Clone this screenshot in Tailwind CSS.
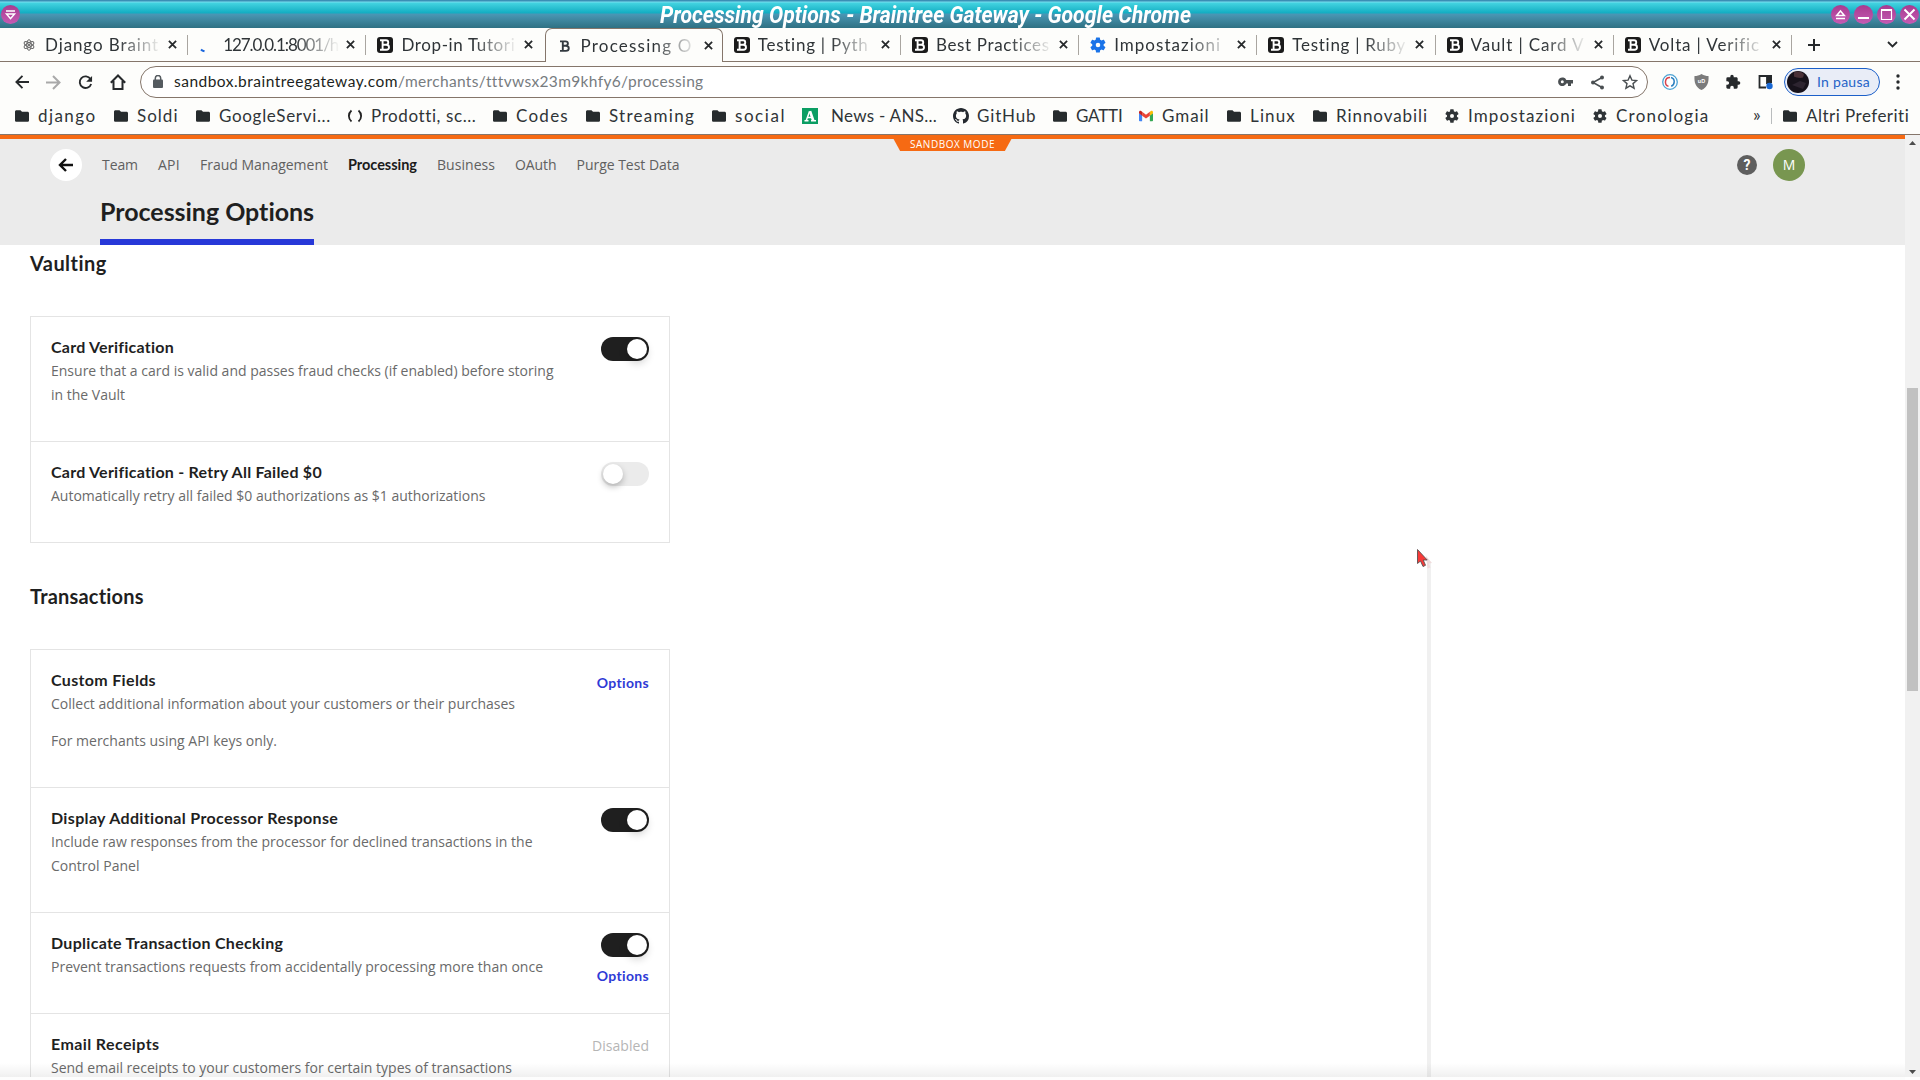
<!DOCTYPE html>
<html lang="it">
<head>
<meta charset="utf-8">
<title>Processing Options - Braintree Gateway</title>
<script src="https://cdn.jsdelivr.net/npm/@tailwindcss/browser@4"></script>
</head>
<body class="w-[1920px] h-[1080px] overflow-hidden bg-white font-['Open_Sans',sans-serif]">
<svg class="absolute size-0">
  <symbol id="folder" viewBox="0 0 14 14"><path fill="#262b2d" d="M1.500 1.300h4l1.500 1.500h5.500c.8 0 1.500.6 1.500 1.400v7.200c0 .8-.7 1.400-1.500 1.400h-11c-.8 0-1.500-.6-1.500-1.400v-8.700c0-.8.700-1.400 1.500-1.400z"/></symbol>
  <symbol id="gear" viewBox="1.500 1.500 21 21"><path fill="currentColor" fill-rule="evenodd" d="M19.400 13a7.500 7.500 0 0 0 0-2l2.200-1.700c.2-.1.200-.4.100-.6l-2-3.500c-.1-.2-.4-.3-.6-.2l-2.600 1a7.700 7.700 0 0 0-1.700-1l-.4-2.600a.5.500 0 0 0-.5-.4h-4a.5.500 0 0 0-.5.400l-.4 2.700c-.6.200-1.200.6-1.700 1l-2.500-1.100c-.2-.1-.5 0-.6.200l-2 3.500c-.1.200-.1.500.1.600l2.200 1.700a7.500 7.500 0 0 0 0 2l-2.200 1.700c-.2.100-.2.400-.1.600l2 3.500c.1.200.4.300.6.200l2.500-1c.5.400 1.100.7 1.700 1l.4 2.600c0 .2.200.4.500.4h4c.3 0 .5-.2.500-.4l.4-2.700c.6-.2 1.200-.6 1.700-1l2.500 1c.2.100.5 0 .6-.2l2-3.500c.1-.2.100-.5-.1-.6zM12 15a3 3 0 1 1 0-6 3 3 0 0 1 0 6z"/></symbol>
  <symbol id="braces" viewBox="0 0 16 16"><path fill="none" stroke="#222" stroke-width="1.800" d="M4.500 2.500C1 5.500 1 10.500 4.500 13.500M11.500 2.500c3.500 3 3.500 8 0 11"/></symbol>
  <symbol id="ansa" viewBox="0 0 16 16"><path fill="#0b9e63" d="M0 0h16v16H0z"/><path fill="none" stroke="#fff" stroke-width="1.500" d="M2.500 12.700h4M9 12.700h5M4.300 12.500 7.500 3.500M5.300 9.600h4.500"/><path stroke="#fff" stroke-width="2.600" d="m8 3.200 3.200 9.300"/></symbol>
  <symbol id="github" viewBox="0 0 16 16"><path fill="#24292f" d="M8 0C3.580 0 0 3.580 0 8c0 3.540 2.290 6.530 5.470 7.590.4.070.55-.17.55-.38 0-.19-.01-.82-.01-1.490-2.010.37-2.530-.49-2.690-.94-.09-.23-.48-.94-.82-1.130-.28-.15-.68-.52-.01-.53.63-.01 1.080.58 1.230.82.72 1.210 1.870.87 2.330.66.07-.52.28-.87.51-1.070-1.780-.2-3.640-.89-3.640-3.950 0-.87.31-1.590.82-2.150-.08-.2-.36-1.020.08-2.120 0 0 .67-.21 2.200.82.64-.18 1.320-.27 2-.27s1.360.09 2 .27c1.530-1.040 2.200-.82 2.200-.82.44 1.100.16 1.920.08 2.120.51.56.82 1.270.82 2.150 0 3.070-1.870 3.750-3.650 3.950.29.25.54.73.54 1.480 0 1.070-.01 1.930-.01 2.200 0 .21.15.46.55.38A8 8 0 0 0 16 8c0-4.420-3.580-8-8-8z"/></symbol>
  <symbol id="gmail" viewBox="0 0 16 14"><path fill="#4285f4" d="M0 3.500 3.600 6v7H1.200C.5 13 0 12.500 0 11.800z"/><path fill="#34a853" d="M12.400 6 16 3.500v8.300c0 .7-.5 1.200-1.200 1.200h-2.400z"/><path fill="#fbbc04" d="M12.400 2.200 13.600 1.300c1-.7 2.400 0 2.400 1.300v1.300l-3.600 2.700z"/><path fill="#ea4335" d="M3.600 2.200 8 5.500l4.400-3.300v4.400L8 9.900 3.600 6.600z"/><path fill="#c5221f" d="M0 2.600C0 1.300 1.400.6 2.400 1.300l1.200.9v4.400L0 3.900z"/></symbol>
  <symbol id="btree" viewBox="0 0 16 16"><rect width="16" height="16" rx="3" fill="#1b1b1b"/><path fill="none" stroke="#fff" stroke-width="1.900" d="M3 3.300h6c3 0 3 4.200 0 4.400H5.500M3 12.700h6.300c3.600 0 3.600-5 0-5M5.600 3.300v9.400"/></symbol>
  <symbol id="bplain" viewBox="0 0 16 16"><path fill="none" stroke="#333a40" stroke-width="1.900" d="M3 3.400H8.500c3.200 0 3.200 4.300 0 4.400H5.800M3 12.900h6c3.700 0 3.700-5.100 0-5.100M5.800 3.400v9.500"/></symbol>
  <symbol id="atom" viewBox="0 0 16 16"><g fill="none" stroke="#666" stroke-width="1"><ellipse cx="8" cy="8" rx="5.400" ry="2.200" transform="rotate(30 8 8)"/><ellipse cx="8" cy="8" rx="5.400" ry="2.200" transform="rotate(90 8 8)"/><ellipse cx="8" cy="8" rx="5.400" ry="2.200" transform="rotate(150 8 8)"/></g><circle cx="8" cy="8" r="1.100" fill="#555"/></symbol>
  <symbol id="spin" viewBox="0 0 16 16"><path fill="none" stroke="#1a66dd" stroke-width="2" d="M2 12.500c.9.900 2 1.400 3.500 1.800"/></symbol>
  <symbol id="close" viewBox="0 0 10 10"><path stroke="#26292b" stroke-width="2" d="m1 1 8 8M9 1 1 9"/></symbol>
  <linearGradient id="orb" x2="0" y2="1"><stop stop-color="#a83a8f"/><stop offset="1" stop-color="#c45bb3"/></linearGradient>
</svg>

<div class="flex flex-col h-[1080px]">
  <!-- window title bar -->
  <header class="relative h-7 shrink-0 bg-[linear-gradient(#3a8fb5_0px,#3a8fb5_1px,#79dff0_2px,#43d3e0_3px,#12adc2_13px,#4a97b5_14px,#2f7183_28px)] flex items-center justify-between pl-[1px] pr-[1px]">
    <svg class="size-[19px]" viewBox="0 0 19 19"><circle cx="9.500" cy="9.500" r="9.500" fill="url(#orb)"/><g fill="none" stroke="#fff" stroke-width="1.500"><path d="M5 6h9M5.500 9h8l-4 4.700z"/></g></svg>
    <div class="absolute left-[660px] top-0.5 h-7 leading-7 whitespace-nowrap text-white font-bold italic text-[23px] font-['Roboto',sans-serif] origin-left" data-scale="531">Processing Options - Braintree Gateway - Google Chrome</div>
    <div class="flex gap-1">
      <svg class="size-[19px]" viewBox="0 0 19 19"><circle cx="9.500" cy="9.500" r="9.500" fill="url(#orb)"/><path fill="none" stroke="#fff" stroke-width="1.500" d="M5 13.500h9M5.700 10.500h7.600L9.500 6z"/></svg>
      <svg class="size-[19px]" viewBox="0 0 19 19"><circle cx="9.500" cy="9.500" r="9.500" fill="url(#orb)"/><path stroke="#fff" stroke-width="2" d="M4 13h11"/></svg>
      <svg class="size-[19px]" viewBox="0 0 19 19"><circle cx="9.500" cy="9.500" r="9.500" fill="url(#orb)"/><path fill="none" stroke="#fff" stroke-width="1.200" d="M4.500 5h10v9.500h-10z"/><path stroke="#fff" stroke-width="2" d="M4 5h11"/></svg>
      <svg class="size-[19px]" viewBox="0 0 19 19"><circle cx="9.500" cy="9.500" r="9.500" fill="url(#orb)"/><path stroke="#fff" stroke-width="2" d="m4.500 4.500 10 10M14.500 4.500l-10 10"/></svg>
    </div>
  </header>

  <!-- tab strip -->
  <div class="flex h-[34px] shrink-0 bg-[#fdfdfb] font-['Lato',sans-serif] text-[17px] text-[#2f3437]">
    <div class="w-[10px] border-b border-[#85766b]"></div>
    <div id="tabs" class="flex"></div>
    <div class="flex-1 flex items-center justify-between border-b border-[#85766b] pl-4 pr-[22px]">
      <svg class="size-3" viewBox="0 0 12 12"><path stroke="#26292b" stroke-width="2" d="M6 0v12M0 6h12"/></svg>
      <svg class="w-[11px] h-[7px]" viewBox="0 0 11 7"><path fill="none" stroke="#26292b" stroke-width="1.800" d="m1 1 4.500 4.500L10 1"/></svg>
    </div>
  </div>

  <!-- toolbar -->
  <div class="flex items-center h-10 shrink-0 bg-[#fdfdfb] pl-[15px] pr-[16px]">
    <div class="flex items-center gap-[17px] w-[125px]">
      <svg class="size-[14px]" viewBox="0 0 15 15"><path fill="none" stroke="#26292b" stroke-width="2" d="M15 7.500H1.500M8 1 1.500 7.500 8 14"/></svg>
      <svg class="size-[15px]" viewBox="0 0 15 15"><path fill="none" stroke="#a9a9a9" stroke-width="2" d="M0 7.500h13.500M7 1l6.500 6.500L7 14"/></svg>
      <svg class="size-[15px]" viewBox="0 0 16 16"><path fill="none" stroke="#26292b" stroke-width="2" d="M13.300 4.300a6.200 6.200 0 1 0 .7 5.200"/><path fill="#26292b" d="M15 1v6.300H8.700z"/></svg>
      <svg class="size-4" viewBox="0 0 16 16"><path fill="none" stroke="#26292b" stroke-width="2" d="M.8 8.700 8 1.500l7.200 7.200M3.500 7v8h9V7"/></svg>
    </div>
    <div class="flex items-center w-[1508px] h-8 rounded-full border border-[#85766b] bg-white pl-3 pr-[9px] font-['Lato',sans-serif] text-[15.500px]">
      <svg class="w-[10px] h-[13px] mb-px" viewBox="0 0 10 13"><rect y="4.500" width="10" height="8.500" rx="1" fill="#555b60"/><path fill="none" stroke="#555b60" stroke-width="1.500" d="M2.300 5V3.200a2.700 2.700 0 0 1 5.400 0V5"/></svg>
      <span class="ml-[11px] text-[#1c1f21] whitespace-nowrap" data-w="224">sandbox.braintreegateway.com</span><span class="text-[#777c7f] whitespace-nowrap" data-w="305">/merchants/tttvwsx23m9khfy6/processing</span>
      <div class="ml-auto flex items-center gap-[17px] text-[#4a4f52]">
        <svg class="w-[15px] h-[10px]" viewBox="0 0 15 10"><path fill="currentColor" fill-rule="evenodd" d="M8.300 3A4.300 4.300 0 1 0 8.300 6.500H10V9h3V6.500h2V3zM4.300 3.300a1.500 1.500 0 1 1 0 3 1.500 1.500 0 0 1 0-3z"/></svg>
        <svg class="w-[15px] h-[15px]" viewBox="0 0 15 15"><path fill="none" stroke="currentColor" stroke-width="1.500" d="m12 2.500-9 5 9 5"/><circle cx="12" cy="2.500" r="2" fill="currentColor"/><circle cx="3" cy="7.500" r="2" fill="currentColor"/><circle cx="12" cy="12.500" r="2" fill="currentColor"/></svg>
        <svg class="w-4 h-4" viewBox="0 0 16 16"><path fill="none" stroke="currentColor" stroke-width="1.400" d="m8 1.800 1.900 4.300 4.700.4-3.600 3.100 1.100 4.600L8 11.800l-4.100 2.400L5 9.600 1.400 6.500l4.700-.4z"/></svg>
      </div>
    </div>
    <div class="flex items-center gap-4 ml-[14px]">
      <svg class="size-4" viewBox="0 0 16 16"><circle cx="8" cy="8" r="7.300" fill="#fff" stroke="#4da3d4" stroke-width="1.300"/><path fill="none" stroke="#2a7fbf" stroke-width="1.500" d="M9 3.500C13.500 4.500 13 11 9.200 12.300"/><path fill="none" stroke="#d8434b" stroke-width="1.500" d="M8 3.600C2.500 3.500 2 11 6.500 12.400"/></svg>
      <svg class="w-[15px] h-4" viewBox="0 0 15 16"><path fill="#7b7b7b" d="M7.500 0C10 1.500 12 2 14.500 2c.5 6-1 11.500-7 14C1.500 13.500 0 8 .5 2 3 2 5 1.500 7.500 0z"/><text x="7.500" y="9.300" text-anchor="middle" font-family="Liberation Sans,sans-serif" font-weight="bold" font-size="5.500" fill="#fff">uD</text></svg>
      <svg class="size-4" viewBox="0 0 24 24"><path fill="#26292b" d="M20.500 11H19V7c0-1.100-.9-2-2-2h-4V3.500a2.500 2.500 0 0 0-5 0V5H4a2 2 0 0 0-2 2v3.800h1.500a2.700 2.700 0 0 1 0 5.400H2V20c0 1.100.9 2 2 2h3.800v-1.500a2.700 2.700 0 0 1 5.400 0V22H17a2 2 0 0 0 2-2v-4h1.500a2.500 2.500 0 0 0 0-5z"/></svg>
      <svg class="w-[15px] h-4 ml-px" viewBox="0 0 15 16"><path fill="none" stroke="#26292b" stroke-width="1.800" d="M8 13.500H1.500V2H9v8"/><path fill="#26292b" d="M9 1h5v8H9z"/><circle cx="11.500" cy="12" r="3.200" fill="#1967d2"/></svg>
    </div>
    <div class="ml-[11px] flex items-center w-[96px] h-7 rounded-full border border-[#1b5fc9] bg-[#e9edf7] pl-[2px] font-['Lato',sans-serif] text-sm text-[#1f63c8]">
      <svg class="size-[22px]" viewBox="0 0 22 22"><circle cx="11" cy="11" r="11" fill="#17121b"/><path fill="#4a3138" d="M7 1.500c4-2 8-.5 10 2l-1 3c-3 1-7 0-9-1z"/><path fill="#2d2430" d="m5 14 8-4 6 2-3 6z"/></svg>
      <span class="ml-2 whitespace-nowrap" data-w="53">In pausa</span>
    </div>
    <svg class="ml-auto w-1 h-4 mr-1" viewBox="0 0 4 16"><g fill="#26292b"><circle cx="2" cy="2" r="1.700"/><circle cx="2" cy="8" r="1.700"/><circle cx="2" cy="14" r="1.700"/></g></svg>
  </div>

  <!-- bookmarks -->
  <div class="flex h-[33px] shrink-0 items-start bg-[#fdfdfb] border-b border-[#85766b] pl-[15px] font-['Lato',sans-serif] text-[17px] text-[#2f3437]">
    <div id="bookmarks" class="flex items-center h-7"></div>
    <div class="flex items-center h-7 ml-[44px] text-lg leading-none"><span class="w-[18px] pb-1">»</span><span class="w-px h-4 bg-[#b9bcbd]"></span></div>
    <div class="flex items-center h-7 ml-[11px]"><svg class="size-[14px]"><use href="#folder"/></svg><span class="ml-[9px] whitespace-nowrap" data-w="103.500">Altri Preferiti</span></div>
  </div>

  <!-- page -->
  <div class="flex flex-1 min-h-0">
    <main class="relative w-[1905px] overflow-hidden">
      <section class="relative h-[110px] border-t-4 border-[#f66a13] bg-[#ebebeb]">
        <div class="absolute left-[893px] -top-px w-[119px] h-[13px] bg-[#f66a13] [clip-path:polygon(0_0,100%_0,94%_100%,6%_100%)] flex justify-center text-[10px] leading-[12px] text-white whitespace-nowrap"><span data-w="85">SANDBOX MODE</span></div>
        <div class="flex items-center pl-[50px] pr-[100px] pt-[10px]">
          <svg class="size-8" viewBox="0 0 32 32"><circle cx="16" cy="16" r="16" fill="#fff"/><path fill="none" stroke="#111" stroke-width="2.400" d="M23 16H10.500M16 10l-6 6 6 6"/></svg>
          <nav class="flex items-center gap-5 ml-5 text-sm text-[#606060] whitespace-nowrap">
            <a data-w="36">Team</a><a data-w="22">API</a><a data-w="128">Fraud Management</a><a class="font-['Lato',sans-serif] font-bold text-[14.500px] text-[#1b1b1b]" data-w="69">Processing</a><a data-w="58">Business</a><a data-w="41.500">OAuth</a><a data-w="103">Purge Test Data</a>
          </nav>
          <div class="ml-auto size-5 rounded-full bg-[#5e5e5e] text-white text-center text-sm leading-5 font-bold font-['Roboto',sans-serif]">?</div>
          <div class="ml-4 size-8 rounded-full bg-[#789650] text-white text-center text-sm leading-8">M</div>
        </div>
        <h1 class="ml-[100px] mt-[7px] inline-block h-[57px] w-[214px] border-b-[6px] border-[#2738d8] font-['Lato',sans-serif] font-bold text-[25px] leading-[47px] text-[#1f1f1f] whitespace-nowrap"><span data-w="214.500">Processing Options</span></h1>
      </section>

      <section class="pl-[30px] font-['Open_Sans',sans-serif]">
        <h2 class="h-[71px] pt-1 font-['Lato',sans-serif] font-bold text-xl leading-7 text-[#1f1f1f]"><span data-w="77">Vaulting</span></h2>
        <div id="vaulting" class="w-[640px] border border-t-0 border-[#e4e4e4]"></div>
        <h2 class="h-[106px] pt-[39px] font-['Lato',sans-serif] font-bold text-xl leading-7 text-[#1f1f1f]"><span data-w="114">Transactions</span></h2>
        <div id="transactions" class="w-[640px] border border-t-0 border-[#e4e4e4]"></div>
      </section>

      <div class="absolute left-[1427px] top-[427px] w-1 h-[520px] bg-black/6"></div>
      <svg class="absolute left-[1416px] top-[413px] w-[18px] h-[22px]" viewBox="0 0 18 22"><path fill="#efdcdc" d="M10 8l6 7-3 .5 1.500 4-3 1z"/><path fill="#f83a38" stroke="#5a5050" stroke-width=".9" d="M1.500 1.500v14l3-2.500 2.500 5.500 2.500-1.200-2.300-5.300h4z"/></svg>
      <div class="absolute left-0 right-0 bottom-[3px] h-[14px] bg-linear-to-b from-transparent to-black/6"></div>
      <div class="absolute left-0 right-0 bottom-0 h-[3px] bg-[#fdfdfd]"></div>
    </main>
    <aside class="w-[15px] bg-[#f1f1f1] flex flex-col items-center pt-[6px] pb-[3px] mb-[3px]">
      <svg class="w-[7px] h-1" viewBox="0 0 7 4"><path fill="#4d4d4d" d="M0 4 3.500 0 7 4z"/></svg>
      <div class="mt-[243px] w-[11px] h-[303px] bg-[#c1c1c1]"></div>
      <svg class="mt-auto w-[7px] h-1" viewBox="0 0 7 4"><path fill="#4d4d4d" d="m0 0 3.500 4L7 0z"/></svg>
    </aside>
  </div>
</div>

<script>
const tabs = [
  ['atom', 'Django Braint', 114], ['spin', '127.0.0.1:8001/h', 115], ['btree', 'Drop-in Tutori', 114],
  ['bplain', 'Processing O', 112], ['btree', 'Testing | Pyth', 111], ['btree', 'Best Practices', 114],
  ['gear', 'Impostazioni', 107], ['btree', 'Testing | Ruby', 114], ['btree', 'Vault | Card V', 114], ['btree', 'Volta | Verific', 111],
];
document.getElementById('tabs').innerHTML = tabs.map(([icon, label, w], i) => {
  const box = i === 3
    ? 'relative w-[178.200px] flex items-center rounded-t-[7px] border border-b-0 border-[#85766b] pl-[11px]'
    : 'relative w-[178.200px] flex items-center border-b border-[#85766b] pl-[11px]';
  const sep = i === 2 || i === 3 ? '' : '<span class="absolute right-0 top-[7px] w-px h-5 bg-[#a9a5a0]"></span>';
  return `<div class="${box}"><svg class="size-4 text-[#1a73e8]"><use href="#${icon}"/></svg>
    <span class="ml-2 w-[117px] whitespace-nowrap [mask-image:linear-gradient(90deg,#000_62%,transparent_100%)]"><span data-w="${w}">${label}</span></span>
    <svg class="ml-[6px] size-[9px]"><use href="#close"/></svg>${sep}</div>`;
}).join('');

const marks = [
  ['folder', 'django', 15, 38, 58.5], ['folder', 'Soldi', 114, 137, 41.5], ['folder', 'GoogleServi...', 196, 219, 112], ['braces', 'Prodotti, sc...', 347, 371, 105],
  ['folder', 'Codes', 493, 516, 53], ['folder', 'Streaming', 586, 609, 86], ['folder', 'social', 712, 735, 51], ['ansa', 'News - ANS...', 802, 831, 106],
  ['github', 'GitHub', 953, 977, 59.5], ['folder', 'GATTI', 1053, 1076, 46.5], ['gmail', 'Gmail', 1139, 1162, 47.5], ['folder', 'Linux', 1227, 1250, 46],
  ['folder', 'Rinnovabili', 1313, 1336, 92], ['gear', 'Impostazioni', 1445, 1468, 108], ['gear', 'Cronologia', 1593, 1616, 93.5],
];
document.getElementById('bookmarks').innerHTML = marks.map(([icon, label, x, tx, w], i) => {
  const next = marks[i + 1] ? marks[i + 1][2] : 1709;
  const size = ['braces', 'ansa', 'github'].includes(icon) ? 16 : 14;
  return `<div class="flex items-center whitespace-nowrap" style="width:${next - x}px"><svg class="shrink-0" style="width:${size}px;height:${size}px;margin-right:${tx - x - size}px"><use href="#${icon}"/></svg><span data-w="${w}">${label}</span></div>`;
}).join('');

const toggleOn = '<span class="flex justify-end p-0.5 w-12 h-6 rounded-full bg-[#1f1f1f]"><span class="size-5 rounded-full bg-white shadow-[0_4px_8px_rgba(0,0,0,0.2)]"></span></span>';
const toggleOff = '<span class="flex p-0.5 w-12 h-6 rounded-full bg-[#ebebeb]"><span class="size-5 rounded-full bg-white shadow-[0_3px_6px_rgba(0,0,0,0.25)]"></span></span>';
const options = '<a class="block h-[26px] font-[\'Lato\',sans-serif] font-bold text-sm leading-[25px] text-[#2f3ad6]"><span data-w="52.500">Options</span></a>';
const disabled = '<span class="block text-sm leading-6 text-[#b5b5b5]"><span data-w="57">Disabled</span></span>';
const row = (title, tw, lines, side) => `<div class="flex justify-between border-t border-[#e4e4e4] px-5 pt-5 pb-[34px]">
  <div class="w-[520px]"><h3 class="h-[22px] font-['Lato',sans-serif] font-bold text-base leading-5 text-[#1f1f1f] whitespace-nowrap"><span data-w="${tw}">${title}</span></h3>
  ${lines.map(([t, w, gap]) => `<p class="${gap ? 'mt-[13px] ' : ''}h-6 text-sm leading-6 text-[#6a6a6a] whitespace-nowrap"><span data-w="${w}">${t}</span></p>`).join('')}</div>
  <div class="h-[46px] flex flex-col items-end gap-[6px]">${side}</div></div>`;
document.getElementById('vaulting').innerHTML =
  row('Card Verification', 123, [['Ensure that a card is valid and passes fraud checks (if enabled) before storing', 502.500], ['in the Vault', 74]], toggleOn) +
  row('Card Verification - Retry All Failed $0', 271, [['Automatically retry all failed $0 authorizations as $1 authorizations', 434.500]], toggleOff);
document.getElementById('transactions').innerHTML =
  row('Custom Fields', 105, [['Collect additional information about your customers or their purchases', 464], ['For merchants using API keys only.', 226, 1]], options) +
  row('Display Additional Processor Response', 287.500, [['Include raw responses from the processor for declined transactions in the', 481.500], ['Control Panel', 88.500]], toggleOn) +
  row('Duplicate Transaction Checking', 232.500, [['Prevent transactions requests from accidentally processing more than once', 492]], toggleOn + options) +
  row('Email Receipts', 108.500, [['Send email receipts to your customers for certain types of transactions', 461]], disabled);

function fit() {
  document.querySelectorAll('[data-w]').forEach(el => {
    el.style.letterSpacing = '0px';
    const r = document.createRange();
    r.selectNodeContents(el);
    el.style.letterSpacing = (+el.dataset.w - r.getBoundingClientRect().width) / el.textContent.length + 'px';
  });
  document.querySelectorAll('[data-scale]').forEach(el => {
    el.style.transform = 'none';
    el.style.transform = `scaleX(${el.dataset.scale / el.getBoundingClientRect().width})`;
  });
}
fit();
addEventListener('load', () => { fit(); requestAnimationFrame(fit); setTimeout(fit, 50); });
document.fonts.ready.then(fit);
</script>
</body>
</html>
